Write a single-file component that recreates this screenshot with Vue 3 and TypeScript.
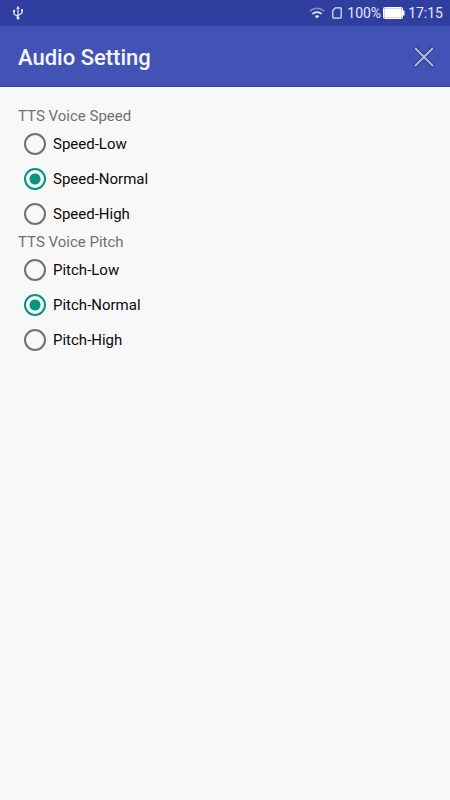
<script setup lang="ts">
import { reactive } from 'vue'

interface Group {
  key: 'speed' | 'pitch'
  title: string
  options: string[]
}

const groups: Group[] = [
  { key: 'speed', title: 'TTS Voice Speed', options: ['Speed-Low', 'Speed-Normal', 'Speed-High'] },
  { key: 'pitch', title: 'TTS Voice Pitch', options: ['Pitch-Low', 'Pitch-Normal', 'Pitch-High'] },
]

const selected = reactive({ speed: 'Speed-Normal', pitch: 'Pitch-Normal' })
</script>

<template>
  <div class="screen">
    <div class="status">
      <svg class="usb" width="12" height="14" viewBox="0 0 12 14" fill="none" stroke="currentColor" stroke-width="1.2">
        <path d="M6 2V12M6 10.5L2 8.2V5.5M6 9.5L10 7.2V4.5" />
        <path d="M6 0L7.8 2.8H4.2Z" fill="currentColor" stroke="none" />
        <circle cx="6" cy="12" r="1.5" fill="currentColor" stroke="none" />
        <circle cx="2" cy="5" r="1.2" fill="currentColor" stroke="none" />
        <path d="M9 3.2h2v2.2H9z" fill="currentColor" stroke="none" />
      </svg>
      <div class="status-right">
        <svg class="wifi" width="16" height="12" viewBox="0 0 16 12" fill="none" stroke="currentColor">
          <path d="M0.8 4.2C5 0.3 11 0.3 15.2 4.2" stroke-width="1.6" opacity="0.45" />
          <path d="M3.4 7C6 4.6 10 4.6 12.6 7" stroke-width="1.7" />
          <path d="M5.7 9.1C7 8 9 8 10.3 9.1L8 11.6Z" fill="currentColor" stroke="none" />
        </svg>
        <svg class="sim" width="10" height="12" viewBox="0 0 10 12" fill="none" stroke="currentColor" stroke-width="1.2">
          <path d="M3.4 0.9H8.4Q9.2 0.9 9.2 1.7V10.3Q9.2 11.1 8.4 11.1H1.6Q0.8 11.1 0.8 10.3V3.5Z" />
        </svg>
        <span>100%</span>
        <svg class="battery" width="22" height="12" viewBox="0 0 22 12">
          <rect x="0.5" y="0.5" width="19" height="11" rx="1" fill="none" stroke="currentColor" />
          <rect x="1.2" y="1.2" width="17.6" height="9.6" fill="currentColor" />
          <path d="M20 3.5h1.5v5H20z" fill="currentColor" />
        </svg>
        <span class="clock">17:15</span>
      </div>
    </div>

    <header class="bar">
      <h1>Audio Setting</h1>
      <button type="button" class="close" aria-label="Close">
        <svg width="22" height="22" viewBox="0 0 22 22" fill="none">
          <path d="M1.4 1.4L20.6 20.6M20.6 1.4L1.4 20.6" stroke="#2c3782" stroke-width="4" />
          <path d="M2 2L20 20M20 2L2 20" stroke="#b4bbdf" stroke-width="2" />
        </svg>
      </button>
    </header>

    <main class="content">
      <fieldset v-for="group in groups" :key="group.key">
        <legend>{{ group.title }}</legend>
        <label v-for="option in group.options" :key="option" class="option">
          <input v-model="selected[group.key]" type="radio" :name="group.key" :value="option" />
          <span>{{ option }}</span>
        </label>
      </fieldset>
    </main>
  </div>
</template>

<style>
body {
  margin: 0;
  background: #f8f8f8;
}
</style>

<style scoped>
.screen {
  min-height: 100vh;
  background: #f8f8f8;
  font-family: Roboto, "Liberation Sans", sans-serif;
}

.status {
  display: flex;
  align-items: center;
  justify-content: space-between;
  box-sizing: border-box;
  height: 26px;
  padding: 0 7px 0 12px;
  background: #303f9f;
  color: #e6e9f8;
  font-size: 14px;
  line-height: 26px;
}

.status-right {
  display: flex;
  align-items: center;
}

.wifi {
  margin-right: 7px;
}

.sim {
  margin-right: 5px;
}

.battery {
  margin: 0 3px 0 2px;
  color: #ffffff;
}

.bar {
  display: flex;
  align-items: center;
  justify-content: space-between;
  box-sizing: border-box;
  height: 61px;
  padding: 2px 15px 0 18px;
  border-bottom: 1px solid #36439a;
  background: #4252b5;
}

h1 {
  margin: 0;
  padding-top: 2px;
  color: #f4f6ff;
  font-size: 22px;
  font-weight: 500;
  line-height: 32px;
}

.close {
  display: flex;
  padding: 0;
  border: 0;
  background: none;
  cursor: pointer;
}

.content {
  padding: 19px 18px;
}

fieldset {
  min-width: 0;
  margin: 0;
  padding: 0;
  border: 0;
}

legend {
  padding: 0;
  color: #707070;
  font-size: 15px;
  line-height: 21px;
}

.option {
  display: flex;
  align-items: center;
  gap: 7px;
  box-sizing: border-box;
  height: 35px;
  padding: 0 0 1px 6px;
  color: #0a0a0a;
  font-size: 15px;
  line-height: 20px;
  cursor: pointer;
}

.option input {
  appearance: none;
  flex: none;
  box-sizing: border-box;
  width: 22px;
  height: 22px;
  margin: 0;
  border: 2px solid #707070;
  border-radius: 50%;
  cursor: pointer;
}

.option input:checked {
  border-color: #079481;
  background: radial-gradient(circle, #079481 5px, transparent 6px);
}
</style>
